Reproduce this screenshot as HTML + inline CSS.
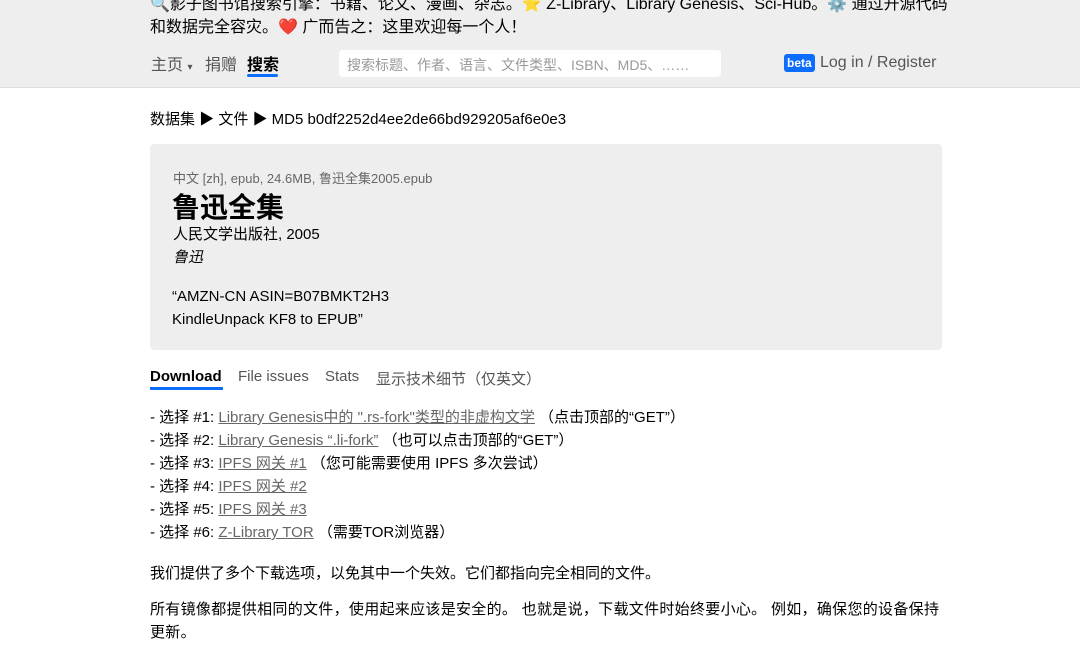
<!DOCTYPE html>
<html><head><meta charset="utf-8"><style>
*{margin:0;padding:0;box-sizing:border-box}
body{width:1080px;height:665px;overflow:hidden;background:#fff;font-family:"Liberation Sans","Noto Sans CJK SC",sans-serif;color:#000;font-size:15px}
.hdr{position:absolute;left:0;top:0;width:1080px;height:88px;background:#eeeeee;border-bottom:1px solid #ddd}
.t{position:absolute;left:150px;font-size:16px;white-space:nowrap}
.lnk{color:#666;text-decoration:underline}
.abs{position:absolute;white-space:nowrap}
</style></head><body>
<div class="hdr">
<div class="t" style="top:-10px">🔍影子图书馆搜索引擎：书籍、论文、漫画、杂志。⭐️ Z-Library、Library Genesis、Sci-Hub。⚙️ 通过开源代码</div>
<div class="t" style="top:13px">和数据完全容灾。❤️ 广而告之：这里欢迎每一个人！</div>
<div class="abs" style="left:151px;top:51px;font-size:16px;color:#555">主页 <span style="font-size:10px">▾</span></div>
<div class="abs" style="left:205px;top:51px;font-size:16px;color:#555">捐赠</div>
<div class="abs" style="left:247px;top:51px;font-size:16px;font-weight:bold">搜索</div>
<div class="abs" style="left:247px;top:74px;width:31px;height:3px;background:#0d6efd;border-radius:2px"></div>
<div class="abs" style="left:339px;top:50px;width:382px;height:27px;background:#fff;border-radius:4px;font-size:14px;color:#999;padding:5px 8px">搜索标题、作者、语言、文件类型、ISBN、MD5、……</div>
<div class="abs" style="left:784px;top:54px;background:#0d6efd;color:#fff;font-size:12px;font-weight:bold;padding:2px 3px;border-radius:3px">beta</div>
<div class="abs" style="left:820px;top:54px;font-size:16px;color:#555">Log in / Register</div>
</div>
<div class="abs" style="left:150px;top:108px;font-size:15px">数据集 ▶ 文件 ▶ MD5 b0df2252d4ee2de66bd929205af6e0e3</div>
<div class="abs" style="left:150px;top:144px;width:792px;height:206px;background:#eeeeee;border-radius:4px"></div>
<div class="abs" style="left:173px;top:168px;font-size:13px;color:#666">中文 [zh], epub, 24.6MB, 鲁迅全集2005.epub</div>
<div class="abs" style="left:172px;top:186px;font-size:28px;font-weight:bold">鲁迅全集</div>
<div class="abs" style="left:173px;top:223px;font-size:15px">人民文学出版社, 2005</div>
<div class="abs" style="left:173px;top:246px;font-size:15px;font-style:italic">鲁迅</div>
<div class="abs" style="left:172px;top:285px;font-size:15px;line-height:23px">“AMZN-CN ASIN=B07BMKT2H3<br>KindleUnpack KF8 to EPUB”</div>
<div class="abs" style="left:150px;top:368px;font-size:15px;font-weight:bold">Download</div>
<div class="abs" style="left:150px;top:387px;width:73px;height:3px;background:#0d6efd"></div>
<div class="abs" style="left:238px;top:368px;font-size:15px;color:#555">File issues</div>
<div class="abs" style="left:325px;top:368px;font-size:15px;color:#555">Stats</div>
<div class="abs" style="left:376px;top:368px;font-size:15px;color:#555">显示技术细节（仅英文）</div>
<div class="abs" style="left:150px;top:406px;font-size:15px;line-height:23px">
- 选择 #1: <span class="lnk">Library Genesis中的 ".rs-fork"类型的非虚构文学</span> （点击顶部的“GET”）<br>
- 选择 #2: <span class="lnk">Library Genesis “.li-fork”</span> （也可以点击顶部的“GET”）<br>
- 选择 #3: <span class="lnk">IPFS 网关 #1</span> （您可能需要使用 IPFS 多次尝试）<br>
- 选择 #4: <span class="lnk">IPFS 网关 #2</span><br>
- 选择 #5: <span class="lnk">IPFS 网关 #3</span><br>
- 选择 #6: <span class="lnk">Z-Library TOR</span> （需要TOR浏览器）</div>
<div class="abs" style="left:150px;top:562px;font-size:15px">我们提供了多个下载选项，以免其中一个失效。它们都指向完全相同的文件。</div>
<div class="abs" style="left:150px;top:598px;font-size:15px;line-height:23px;letter-spacing:0.3px">所有镜像都提供相同的文件，使用起来应该是安全的。 也就是说，下载文件时始终要小心。 例如，确保您的设备保持<br>更新。</div>
</body></html>
